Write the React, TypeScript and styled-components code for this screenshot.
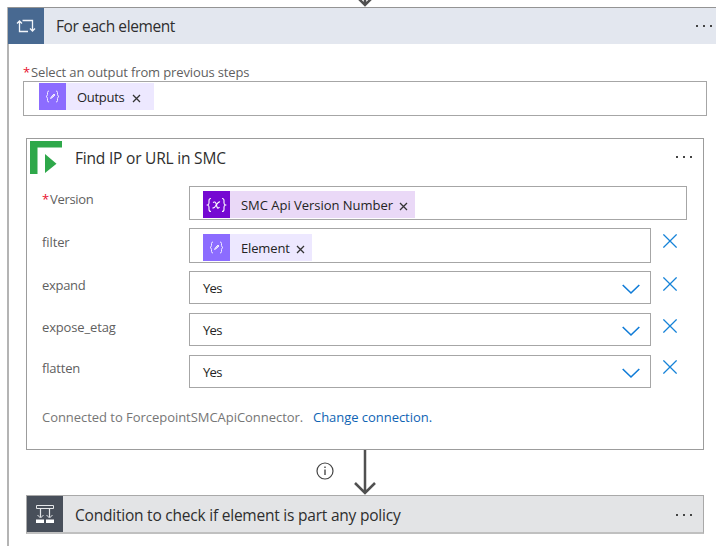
import React from "react";
import styled, { createGlobalStyle } from "styled-components";

const GlobalStyle = createGlobalStyle`
  * { box-sizing: border-box; }
  html, body { margin: 0; background: #fff; overflow: hidden; }
  body { font-family: "Open Sans", "Noto Sans", sans-serif; }
  svg { display: block; flex: none; }
`;

const Canvas = styled.div`
  width: 716px;
  height: 546px;
  overflow: hidden;
  padding-left: 7px;
  background: #fff;
`;

const IncomingArrow = styled.div`
  height: 7px;
  padding-left: 350px;
`;

const Scope = styled.section`
  width: 740px;
  height: 560px;
  border-left: 2px solid #b4b4b4;
`;

const ScopeHeader = styled.header`
  display: flex;
  align-items: center;
  width: 709px;
  height: 37px;
  margin-left: -1px;
  border-top: 1px solid #949494;
  background: #e3e7ef;
`;

const IconTile = styled.div<{ $color: string }>`
  display: flex;
  align-items: center;
  justify-content: center;
  flex: none;
  width: 36px;
  height: 100%;
  background: ${(p) => p.$color};
`;

const Title = styled.h1<{ $tracking: number; $gap?: number }>`
  flex: 1;
  margin: 0 0 0 ${(p) => p.$gap ?? 12}px;
  color: #2e2e2e;
  font-size: 15.5px;
  font-weight: 400;
  line-height: 22px;
  letter-spacing: ${(p) => p.$tracking}px;
  white-space: nowrap;
`;

const MenuButton = styled.button<{ $right: number; $lift?: number }>`
  margin: 0 ${(p) => p.$right}px ${(p) => p.$lift ?? 0}px 0;
  padding: 0;
  border: 0;
  background: none;
`;

const OutputField = styled.div`
  padding: 20px 0 0 14px;
`;

const Label = styled.label<{ $tracking: number }>`
  display: flex;
  color: #5f5f5f;
  font-size: 13px;
  line-height: 17px;
  letter-spacing: ${(p) => p.$tracking}px;
  white-space: nowrap;
`;

const Required = styled.span`
  width: 8px;
  color: #e8112d;
  letter-spacing: 0;
`;

const Input = styled.div<{ $w: number; $h: number; $top?: number; $left?: number }>`
  display: flex;
  align-items: flex-start;
  flex: none;
  width: ${(p) => p.$w}px;
  height: ${(p) => p.$h}px;
  padding: ${(p) => p.$top ?? 0}px 0 0 ${(p) => p.$left ?? 13}px;
  border: 1px solid #a6a6a6;
  background: #fff;
`;

const ChipBox = styled.div<{ $w: number; $bg: string }>`
  display: flex;
  align-items: center;
  width: ${(p) => p.$w}px;
  height: 27px;
  background: ${(p) => p.$bg};
`;

const ChipIcon = styled.div<{ $bg: string }>`
  display: flex;
  align-items: center;
  justify-content: center;
  flex: none;
  width: 27px;
  height: 27px;
  background: ${(p) => p.$bg};
`;

const ChipText = styled.span<{ $w: number; $tracking: number }>`
  width: ${(p) => p.$w}px;
  margin-left: 11px;
  color: #242424;
  font-size: 13px;
  line-height: 20px;
  letter-spacing: ${(p) => p.$tracking}px;
  white-space: nowrap;
`;

const ChipClose = styled.button<{ $drop: number }>`
  margin: ${(p) => p.$drop}px 0 0;
  padding: 0;
  border: 0;
  background: none;
`;

const Card = styled.section`
  width: 678px;
  height: 312px;
  margin: 22px 0 0 17px;
  border: 1px solid #9c9c9c;
`;

const CardHeader = styled.header`
  display: flex;
  align-items: center;
  height: 38px;
  margin-bottom: 9px;
  padding-left: 3px;
`;

const Row = styled.div<{ $h: number }>`
  display: grid;
  grid-template-columns: 147px auto 1fr;
  align-items: start;
  height: ${(p) => p.$h}px;
  padding-left: 15px;
`;

const RowLabel = styled.div<{ $top: number }>`
  padding-top: ${(p) => p.$top}px;
`;

const Select = styled(Input)<{ $pad: number }>`
  align-items: center;
  justify-content: space-between;
  padding: ${(p) => p.$pad}px 10px 0 13px;
  color: #242424;
  font-size: 13px;
  letter-spacing: -0.7px;
`;

const Clear = styled.button<{ $top?: number }>`
  margin: ${(p) => p.$top ?? 6}px 0 0 12px;
  padding: 0;
  border: 0;
  background: none;
`;

const Connection = styled.p`
  display: flex;
  margin: 19px 0 0 15px;
  color: #767676;
  font-size: 13px;
  line-height: 20px;
  letter-spacing: -0.04px;
  white-space: nowrap;
`;

const ConnectionText = styled.span`
  width: 271px;
`;

const Link = styled.a`
  color: #0f64b4;
`;

const Connector = styled.div`
  display: flex;
  height: 45px;
  padding-left: 307px;
`;

const InfoSlot = styled.div`
  width: 38px;
  padding-top: 12px;
`;

const ConditionCard = styled.section`
  display: flex;
  align-items: center;
  width: 678px;
  height: 39px;
  margin-left: 17px;
  border: 1px solid #a9a9a9;
  border-bottom: 2px solid #c0c0c0;
  background: #e3e4e6;

  ${Title} {
    padding-top: 2px;
  }
`;

const Dots = () => (
  <svg width="18" height="4" fill="#444">
    <path d="M1 1h2v2H1zM8 1h2v2H8zM15 1h2v2h-2z" />
  </svg>
);

const Dismiss = () => (
  <svg width="9" height="9" stroke="#333" strokeWidth="1.3">
    <path d="M1 1l7 7M8 1L1 8" />
  </svg>
);

const LoopIcon = () => (
  <svg width="20" height="16" fill="none" stroke="#f2f5fa" strokeWidth="1.3">
    <path d="M12 13.500H3.500V3M1 5.500L3.500 3 6 5.500M6.500 2.500h10V13M14 10.500l2.500 2.500 2.500-2.500" />
  </svg>
);

const ConditionIcon = () => (
  <svg width="20" height="20" fill="none" stroke="#e4e6e9">
    <path d="M1.500 1.500h17v3h-17z" />
    <path d="M5.500 5v8M14.500 5v8" strokeWidth="1.200" />
    <path d="M2.500 11l3 3 3-3M11.500 11l3 3 3-3" />
    <path d="M1 15.500h8v3.500H1zM11 15.500h8v3.500h-8z" fill="#fff" stroke="none" />
  </svg>
);

const ForcepointLogo = () => (
  <svg width="32" height="34" fill="#2ea84a">
    <path d="M0 0h32v6.500H7.500V33H0zM15 13l11.500 9.700L15 32z" />
  </svg>
);

const ExpressionIcon = () => (
  <svg width="15" height="13" fill="none" stroke="#f0eaff" strokeWidth="1">
    <path d="M4 1Q2.500 1 2.500 2.500v2Q2.500 6 1 6.500q1.500.5 1.500 2v2Q2.500 12 4 12M11 1q1.500 0 1.500 1.500v2Q12.500 6 14 6.500q-1.500.5-1.500 2v2Q12.500 12 11 12" />
    <path d="M5.500 8.500l1-2 2.500-2.500 1 1-2.500 2.500z" fill="#d9ccff" />
  </svg>
);

const VariableIcon = () => (
  <svg width="21" height="16" fill="none" stroke="#fff" strokeWidth="1.100">
    <path d="M5 1.500Q3 1.500 3 3.500v2.500Q3 7.500 1.500 8 3 8.500 3 10v2.500q0 2 2 2M16 1.500q2 0 2 2v2.500q0 1.500 1.500 2-1.500.5-1.500 2v2.500q0 2-2 2" />
    <path d="M7 5.500c1.500-1 2.500-.5 3 1l1 3.500c.4 1.500 1.500 1.500 2.500.2M14 5c-1.200-.5-2 .3-3.500 2.800S8 11.500 6.500 10.700" />
  </svg>
);

const Cross = () => (
  <svg width="14" height="14" stroke="#1683d8" strokeWidth="1.250">
    <path d="M.4.4l13.200 13.200M13.600.4L.4 13.600" />
  </svg>
);

const Chevron = () => (
  <svg width="18" height="14" fill="none" stroke="#0f7bd7" strokeWidth="1.600">
    <path d="M.7 4L9 12l8.300-8" />
  </svg>
);

const InfoIcon = () => (
  <svg width="18" height="18" fill="none" stroke="#444" strokeWidth="1.200">
    <circle cx="9" cy="9" r="8" />
    <path d="M9 7.500V13M9 4.500V6" stroke="#555" strokeWidth="1.500" />
  </svg>
);

type ChipProps = {
  text: string;
  width: number;
  textWidth: number;
  tracking: number;
  drop?: number;
  variable?: boolean;
};

function Chip({ text, width, textWidth, tracking, drop = 2, variable }: ChipProps) {
  return (
    <ChipBox $w={width} $bg={variable ? "#ead9f7" : "#ede8ff"}>
      <ChipIcon $bg={variable ? "#7509d2" : "#8c6cff"}>
        {variable ? <VariableIcon /> : <ExpressionIcon />}
      </ChipIcon>
      <ChipText $w={textWidth} $tracking={tracking}>{text}</ChipText>
      <ChipClose $drop={drop}><Dismiss /></ChipClose>
    </ChipBox>
  );
}

const options = [
  { name: "expand", tracking: -0.3, row: 42, labelTop: 6, pad: 1, clearTop: 6 },
  { name: "expose_etag", tracking: -0.15, row: 42, labelTop: 6, pad: 1, clearTop: 6 },
  { name: "flatten", tracking: -0.2, row: 33, labelTop: 5, pad: 0, clearTop: 5 },
];

export default function App() {
  return (
    <>
      <GlobalStyle />
      <Canvas>
        <IncomingArrow>
          <svg width="16" height="7" fill="none" stroke="#505050" strokeWidth="2.500">
            <path d="M8 0v5M1 -2l7 7 7-7" />
          </svg>
        </IncomingArrow>
        <Scope>
          <ScopeHeader>
            <IconTile $color="#486991"><LoopIcon /></IconTile>
            <Title $tracking={-0.4}>For each element</Title>
            <MenuButton $right={4}><Dots /></MenuButton>
          </ScopeHeader>
          <OutputField>
            <Label $tracking={-0.13}><Required>*</Required>Select an output from previous steps</Label>
            <Input $w={684} $h={35} $top={1} $left={15}>
              <Chip text="Outputs" width={115} textWidth={55} tracking={-0.3} drop={4} />
            </Input>
          </OutputField>
          <Card>
            <CardHeader>
              <ForcepointLogo />
              <Title $tracking={-0.2} $gap={13}>Find IP or URL in SMC</Title>
              <MenuButton $right={10} $lift={2}><Dots /></MenuButton>
            </CardHeader>
            <Row $h={42}>
              <RowLabel $top={5}><Label $tracking={-0.3}><Required>*</Required>Version</Label></RowLabel>
              <Input $w={498} $h={34} $top={4}>
                <Chip text="SMC Api Version Number" width={212} textWidth={158} tracking={-0.03} drop={3} variable />
              </Input>
            </Row>
            <Row $h={43}>
              <RowLabel $top={6}><Label $tracking={-0.1}>filter</Label></RowLabel>
              <Input $w={462} $h={35} $top={5}>
                <Chip text="Element" width={109} textWidth={55} tracking={-0.15} drop={3} />
              </Input>
              <Clear><Cross /></Clear>
            </Row>
            {options.map((o) => (
              <Row key={o.name} $h={o.row}>
                <RowLabel $top={o.labelTop}><Label $tracking={o.tracking}>{o.name}</Label></RowLabel>
                <Select $w={462} $h={33} $pad={o.pad}>Yes<Chevron /></Select>
                <Clear $top={o.clearTop}><Cross /></Clear>
              </Row>
            ))}
            <Connection>
              <ConnectionText>Connected to ForcepointSMCApiConnector.</ConnectionText>
              <Link>Change connection.</Link>
            </Connection>
          </Card>
          <Connector>
            <InfoSlot><InfoIcon /></InfoSlot>
            <svg width="24" height="45" fill="none" stroke="#505050" strokeWidth="2.500">
              <path d="M11 0v42M1 33l10 10 10-10" />
            </svg>
          </Connector>
          <ConditionCard>
            <IconTile $color="#484f5a"><ConditionIcon /></IconTile>
            <Title $tracking={-0.22}>Condition to check if element is part any policy</Title>
            <MenuButton $right={10} $lift={-2}><Dots /></MenuButton>
          </ConditionCard>
        </Scope>
      </Canvas>
    </>
  );
}
